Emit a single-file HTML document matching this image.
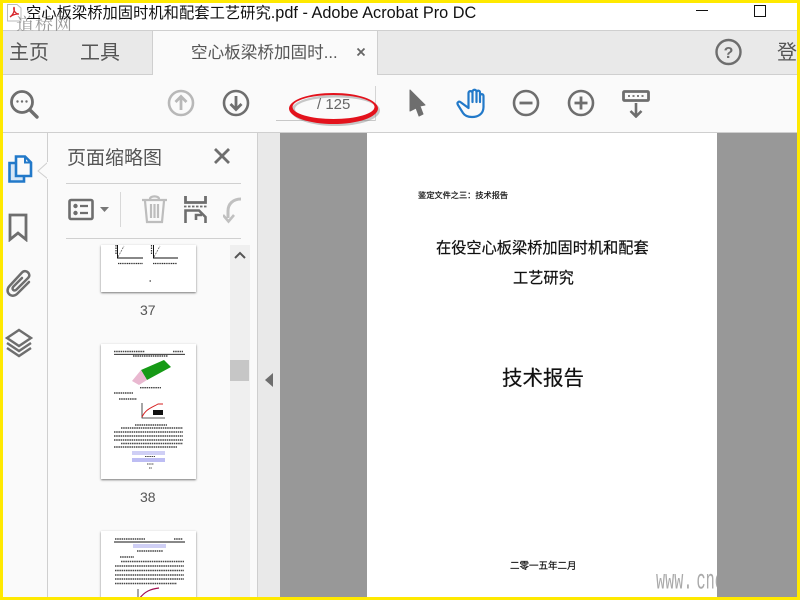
<!DOCTYPE html>
<html><head><meta charset="utf-8">
<style>
html,body{margin:0;padding:0;background:#fff}
#r{position:relative;width:800px;height:600px;overflow:hidden;background:#fafafa;font-family:"Liberation Sans","Noto Sans CJK SC",sans-serif;color:#4b4b4b}
#r div,#r svg{position:absolute}
.t{white-space:nowrap;line-height:1}
.b{-webkit-text-stroke:.2px currentColor}
</style></head><body>
<div id="r">
<!-- title bar -->
<div style="left:0;top:0;width:800px;height:30px;background:#fff"></div>
<div style="left:0;top:30px;width:800px;height:1px;background:#cfcfcf"></div>
<svg style="left:5px;top:3px" width="20" height="20" viewBox="0 0 20 20"><path d="M2.500 1.500H12L16 5V18H2.500Z" fill="#fff" stroke="#bbb"/><path d="M5 14C8 12 10 8 9 4C8 8 11 11 14 11C11 11 7 12 5 14Z" fill="none" stroke="#d8262c" stroke-width="1.300"/></svg>
<div class="t" style="left:16px;top:15px;font-size:18px;color:#999;letter-spacing:1px;font-family:'Noto Serif CJK SC',serif">道桥网</div>
<div class="t" style="left:26px;top:5px;font-size:15.300px;color:#111">空心板梁桥加固时机和配套工艺研究<span style="font-size:16.300px">.pdf - Adobe Acrobat Pro DC</span></div>
<div style="left:696px;top:10px;width:12px;height:1px;background:#111"></div>
<div style="left:754px;top:5px;width:10px;height:10px;border:1px solid #111"></div>
<!-- tab bar -->
<div style="left:0;top:31px;width:800px;height:43px;background:#e9e9e9"></div>
<div style="left:0;top:74px;width:800px;height:1px;background:#cfcfcf"></div>
<div style="left:152px;top:31px;width:224px;height:44px;background:#fafafa;border-left:1px solid #cfcfcf;border-right:1px solid #cfcfcf"></div>
<div class="t" style="left:9px;top:43px;font-size:20px;color:#555">主页</div>
<div class="t" style="left:80px;top:43px;font-size:20px;color:#555">工具</div>
<div class="t" style="left:191px;top:45px;font-size:16.600px;color:#555">空心板梁桥加固时...</div>
<svg style="left:356px;top:47px" width="10" height="10" viewBox="0 0 10 10"><path d="M1.500 1.500L8.500 8.500M8.500 1.500L1.500 8.500" stroke="#666" stroke-width="1.800"/></svg>
<svg style="left:714px;top:38px" width="29" height="29" viewBox="0 0 29 29"><circle cx="14.500" cy="14" r="12" fill="none" stroke="#6e6e6e" stroke-width="2.400"/><text x="14.500" y="20" font-size="16" font-weight="bold" text-anchor="middle" fill="#6e6e6e" font-family="Liberation Sans">?</text></svg>
<div class="t" style="left:777px;top:43px;font-size:20px;color:#555">登</div>
<!-- toolbar icons -->
<svg style="left:8px;top:88px" width="32" height="32" viewBox="0 0 32 32"><circle cx="14" cy="14" r="10.500" fill="none" stroke="#6e6e6e" stroke-width="2.800"/><path d="M22 22L29 29" stroke="#6e6e6e" stroke-width="3.400" stroke-linecap="round"/><circle cx="9.500" cy="13.500" r="1.200" fill="#6e6e6e"/><circle cx="14" cy="13.500" r="1.200" fill="#6e6e6e"/><circle cx="18.500" cy="13.500" r="1.200" fill="#6e6e6e"/></svg>
<svg style="left:167px;top:89px" width="28" height="28" viewBox="0 0 28 28"><circle cx="14" cy="14" r="12" fill="none" stroke="#b8b8b8" stroke-width="2.600"/><path d="M14 21V8M8.500 13L14 7.500L19.500 13" fill="none" stroke="#b8b8b8" stroke-width="2.800"/></svg>
<svg style="left:222px;top:89px" width="28" height="28" viewBox="0 0 28 28"><circle cx="14" cy="14" r="12" fill="none" stroke="#6e6e6e" stroke-width="2.600"/><path d="M14 7V20M8.500 15L14 20.500L19.500 15" fill="none" stroke="#6e6e6e" stroke-width="2.800"/></svg>
<div style="left:276px;top:120px;width:100px;height:1px;background:#c8c8c8"></div>
<div style="left:375px;top:86px;width:1px;height:35px;background:#d4d4d4"></div>
<div class="t" style="left:317px;top:97px;font-size:15px;color:#666">/ 125</div>
<svg style="left:284px;top:88px" width="104" height="44" viewBox="0 0 104 44"><path fill-rule="evenodd" d="M5 20.500a44.500 15.500 0 1 0 89 0a44.500 15.500 0 1 0 -89 0ZM9 19a41 11.500 0 1 0 82 0a41 11.500 0 1 0 -82 0Z" fill="#888" opacity=".45" transform="translate(2,2)"/><path fill-rule="evenodd" d="M5 20.500a44.500 15.500 0 1 0 89 0a44.500 15.500 0 1 0 -89 0ZM8.500 19a41 12 0 1 0 82 0a41 12 0 1 0 -82 0Z" fill="#e3121c"/></svg>
<svg style="left:408px;top:88px" width="20" height="30" viewBox="0 0 20 30"><path d="M2 2L17 17L12 18L15 26L11 28L8 20L2 23Z" fill="#6e6e6e" stroke="#6e6e6e" stroke-linejoin="round"/></svg>
<svg style="left:456px;top:87px" width="30" height="32" viewBox="0 0 30 32"><path d="M12.500 21L5 15.500C3 13.500 .5 15.500 2 18L7 26C9 29 12 30 16 30C22 30 27.500 27 27.500 20V9C27.500 6.500 24 6.500 24 9V15M24 15V5.500C24 3 20.500 3 20.500 5.500V15M20.500 5C20.500 2 16.500 2 16.500 5V15M16.500 6C16.500 3.500 12.500 3.500 12.500 6V21" fill="none" stroke="#2279c9" stroke-width="2.200" stroke-linejoin="round" stroke-linecap="round"/></svg>
<svg style="left:512px;top:89px" width="28" height="28" viewBox="0 0 28 28"><circle cx="14" cy="14" r="12" fill="none" stroke="#6e6e6e" stroke-width="2.600"/><path d="M7.500 14H20.500" stroke="#6e6e6e" stroke-width="2.800"/></svg>
<svg style="left:567px;top:89px" width="28" height="28" viewBox="0 0 28 28"><circle cx="14" cy="14" r="12" fill="none" stroke="#6e6e6e" stroke-width="2.600"/><path d="M7.500 14H20.500M14 7.500V20.500" stroke="#6e6e6e" stroke-width="2.800"/></svg>
<svg style="left:622px;top:90px" width="28" height="28" viewBox="0 0 28 28"><rect x="1.500" y="1.500" width="25" height="9" rx="1" fill="none" stroke="#6e6e6e" stroke-width="2.800"/><path d="M6 6H8M10.500 6H12.500M15 6H17M19.500 6H21.500" stroke="#6e6e6e" stroke-width="1.800"/><path d="M14 13V26M8.500 21L14 26.500L19.500 21" fill="none" stroke="#6e6e6e" stroke-width="2.600"/></svg>
<div style="left:0;top:132px;width:800px;height:1px;background:#cfcfcf"></div>
<!-- left rail -->
<div style="left:47px;top:133px;width:1px;height:467px;background:#cfcfcf"></div>
<svg style="left:36px;top:160px" width="13" height="24" viewBox="0 0 13 24"><path d="M12 2L2 11L12 19" fill="#fafafa" stroke="#cfcfcf"/><path d="M12 2V19" stroke="#fafafa" stroke-width="2"/></svg>
<svg style="left:7px;top:154px" width="26" height="30" viewBox="0 0 26 30"><path d="M9 9H2.500V27.500H17V22" fill="#d6e6f6" stroke="#2279c9" stroke-width="2.600"/><path d="M9 2.500H18L24 8.500V22H9Z" fill="#fafafa" stroke="#2279c9" stroke-width="2.600"/><path d="M18 2.500V8.500H24" fill="none" stroke="#2279c9" stroke-width="2"/></svg>
<svg style="left:8px;top:212px" width="20" height="30" viewBox="0 0 20 30"><path d="M2 3H18V27.500L10 21L2 27.500Z" fill="none" stroke="#6e6e6e" stroke-width="2.800"/></svg>
<svg style="left:4px;top:268px" width="28" height="30" viewBox="0 0 28 30"><path d="M25 14L13 26C7.500 31 0 24 5.500 18L18 4.500C22 .5 28 6.500 24 10L12.500 21.500C10 24 7 21 9.500 18.500L18 10" fill="none" stroke="#6e6e6e" stroke-width="2.500" stroke-linecap="round"/></svg>
<svg style="left:5px;top:328px" width="28" height="30" viewBox="0 0 28 30"><path d="M14 2L26 10L14 18L2 10Z" fill="none" stroke="#6e6e6e" stroke-width="2.400"/><path d="M2 15L14 23L26 15M2 20L14 28L26 20" fill="none" stroke="#6e6e6e" stroke-width="2.400"/></svg>
<!-- panel -->
<div class="t" style="left:67px;top:148.500px;font-size:19px;color:#555">页面缩略图</div>
<svg style="left:213px;top:147px" width="18" height="18" viewBox="0 0 18 18"><path d="M2 2L16 16M16 2L2 16" stroke="#6e6e6e" stroke-width="2.800"/></svg>
<div style="left:66px;top:183px;width:175px;height:1px;background:#d0d0d0"></div>
<div style="left:66px;top:238px;width:175px;height:1px;background:#d0d0d0"></div>
<div style="left:120px;top:192px;width:1px;height:35px;background:#d8d8d8"></div>
<svg style="left:68px;top:198px" width="26" height="24" viewBox="0 0 26 24"><rect x="1.500" y="2" width="23" height="19" rx="1.500" fill="none" stroke="#6e6e6e" stroke-width="2.600"/><circle cx="7.500" cy="8" r="2.200" fill="#6e6e6e"/><circle cx="7.500" cy="15" r="2.200" fill="#6e6e6e"/><path d="M12 8H20M12 15H20" stroke="#6e6e6e" stroke-width="2.200"/></svg>
<svg style="left:100px;top:207px" width="9" height="6" viewBox="0 0 9 6"><path d="M0 0H9L4.500 5Z" fill="#777"/></svg>
<svg style="left:141px;top:194px" width="27" height="30" viewBox="0 0 27 30"><path d="M1 6H26M9 5C9 1.500 18 1.500 18 5M4 7L6 28H21L23 7M10 10V24M13.500 10V24M17 10V24" fill="none" stroke="#bdbdbd" stroke-width="2.200"/></svg>
<svg style="left:184px;top:195px" width="23" height="29" viewBox="0 0 23 29"><path d="M1.500 1V7.500H21.500V1" fill="none" stroke="#6e6e6e" stroke-width="2.800"/><path d="M0 11.500H23" stroke="#6e6e6e" stroke-width="1.800" stroke-dasharray="2.500 1.500"/><path d="M1.500 28V15.500H15L21.500 22V28M12 25V20H18" fill="none" stroke="#6e6e6e" stroke-width="2.600"/></svg>
<svg style="left:223px;top:197px" width="19" height="28" viewBox="0 0 19 28"><path d="M18 2C10 2 5 7 5 14V21" fill="none" stroke="#c0c0c0" stroke-width="3"/><path d="M0 18L5.500 24.500L11 18" fill="none" stroke="#c0c0c0" stroke-width="2.600"/></svg>
<!-- scrollbar -->
<div style="left:230px;top:245px;width:20px;height:355px;background:#efefef"></div>
<div style="left:230px;top:360px;width:19px;height:21px;background:#c6c6c6"></div>
<svg style="left:234px;top:251px" width="12" height="9" viewBox="0 0 12 9"><path d="M1 7L6 2L11 7" fill="none" stroke="#555" stroke-width="2"/></svg>
<!-- thumb 37 -->
<div style="left:101px;top:245px;width:95px;height:47px;background:#fff;box-shadow:0 1px 2px #777"></div>
<svg style="left:101px;top:245px" width="95" height="47" viewBox="0 0 95 47"><path d="M16.500 0V13H42M52.500 0V13H77" fill="none" stroke="#111" stroke-width="1"/><path d="M15 0V10M50.500 0V10" stroke="#333" stroke-width="1.200" stroke-dasharray="1.500 1"/><path d="M17 12L23 1M53 12L59 1" stroke="#666" stroke-width=".8" stroke-dasharray="2 1"/><path d="M17 18.500H42M52 18.500H76" stroke="#333" stroke-width="1.300" stroke-dasharray="1.200 .6"/><rect x="48.500" y="35.500" width="1.500" height="1" fill="#111"/></svg>
<div class="t" style="left:140px;top:303px;font-size:14px;color:#555">37</div>
<!-- thumb 38 -->
<div style="left:101px;top:344px;width:95px;height:135px;background:#fff;box-shadow:0 1px 2px #777"></div>
<svg style="left:101px;top:344px" width="95" height="135" viewBox="0 0 95 135"><g stroke-dasharray="1.500 .7" fill="none" stroke="#444" stroke-width="1.400"><path d="M13 7.500H44M72 7.500H82M32 12H67M39 43.700H60M13 49H32M18 55H36M34 81H66M20 84H82M13 88H82M13 92H82M13 96H82M20 99.500H82M13 103H76"/><path d="M44 112.500H54M46 120H53M48 124H51" stroke-width="1"/></g><path d="M13 10.300H84" stroke="#111" stroke-width=".9"/><path d="M40 26L63 16L70 23L46 36Z" fill="#169a16"/><path d="M40 26L46 36L38 41L31 37Z" fill="#e9b8d0"/><path d="M41 59V74H64" fill="none" stroke="#222" stroke-width=".8"/><path d="M41 73C45 65 50 64 57 60H62" fill="none" stroke="#d62020" stroke-width="1"/><rect x="52" y="66" width="10" height="5" fill="#111"/><rect x="31" y="107" width="33" height="4" fill="#cfcff5"/><rect x="31" y="114" width="33" height="4" fill="#bdbdf3"/></svg>
<div class="t" style="left:140px;top:490px;font-size:14px;color:#555">38</div>
<!-- thumb 39 -->
<div style="left:101px;top:531px;width:95px;height:69px;background:#fff;box-shadow:0 1px 2px #777"></div>
<svg style="left:101px;top:531px" width="95" height="69" viewBox="0 0 95 69"><g stroke-dasharray="1.500 .7" fill="none" stroke="#444" stroke-width="1.400"><path d="M14 8H44M73 8H82M36 20H62M19 26H33M20 30.500H83M14 35H83M14 39.500H83M14 44H83M14 48H83M14 52.500H76"/></g><path d="M13 11H84" stroke="#111" stroke-width=".9"/><rect x="32" y="13" width="33" height="4" fill="#cfcff5"/><path d="M37 58V69" stroke="#222" stroke-width=".8"/><path d="M38 68C44 60 50 58 58 57" fill="none" stroke="#a01050" stroke-width="1.200"/></svg>
<!-- viewer -->
<div style="left:257px;top:133px;width:1px;height:467px;background:#cfcfcf"></div>
<div style="left:258px;top:133px;width:22px;height:467px;background:#e9e9e9"></div>
<svg style="left:264px;top:373px" width="10" height="14" viewBox="0 0 10 14"><path d="M9 0V14L1 7Z" fill="#6e6e6e"/></svg>
<div style="left:280px;top:133px;width:520px;height:467px;background:#989898"></div>
<div style="left:367px;top:133px;width:350px;height:467px;background:#fff"></div>
<div class="t b" style="left:418px;top:191.500px;font-size:8.200px;color:#111">鉴定文件之三：技术报告</div>
<div class="t b" style="left:436px;top:240.500px;font-size:15.200px;color:#111">在役空心板梁桥加固时机和配套</div>
<div class="t b" style="left:513px;top:271px;font-size:15.200px;color:#111">工艺研究</div>
<div class="t b" style="left:502px;top:369px;font-size:20.500px;color:#111">技术报告</div>
<div class="t b" style="left:510px;top:561.500px;font-size:9.500px;color:#111">二零一五年二月</div>
<div style="left:655px;top:560px;width:62px;height:37px;overflow:hidden"><div class="t" style="left:1px;top:7.500px;font-size:15.200px;color:#aaa;font-family:'Liberation Mono',monospace;transform:scaleY(1.850);transform-origin:0 0">www.<span style="margin-left:4px">cnc</span></div></div>
<!-- yellow frame -->
<div style="left:0;top:0;width:800px;height:3px;background:#ffe900"></div>
<div style="left:0;top:597px;width:800px;height:3px;background:#ffe900"></div>
<div style="left:0;top:0;width:3px;height:600px;background:#ffe900"></div>
<div style="left:797px;top:0;width:3px;height:600px;background:#ffe900"></div>
</div>
</body></html>
